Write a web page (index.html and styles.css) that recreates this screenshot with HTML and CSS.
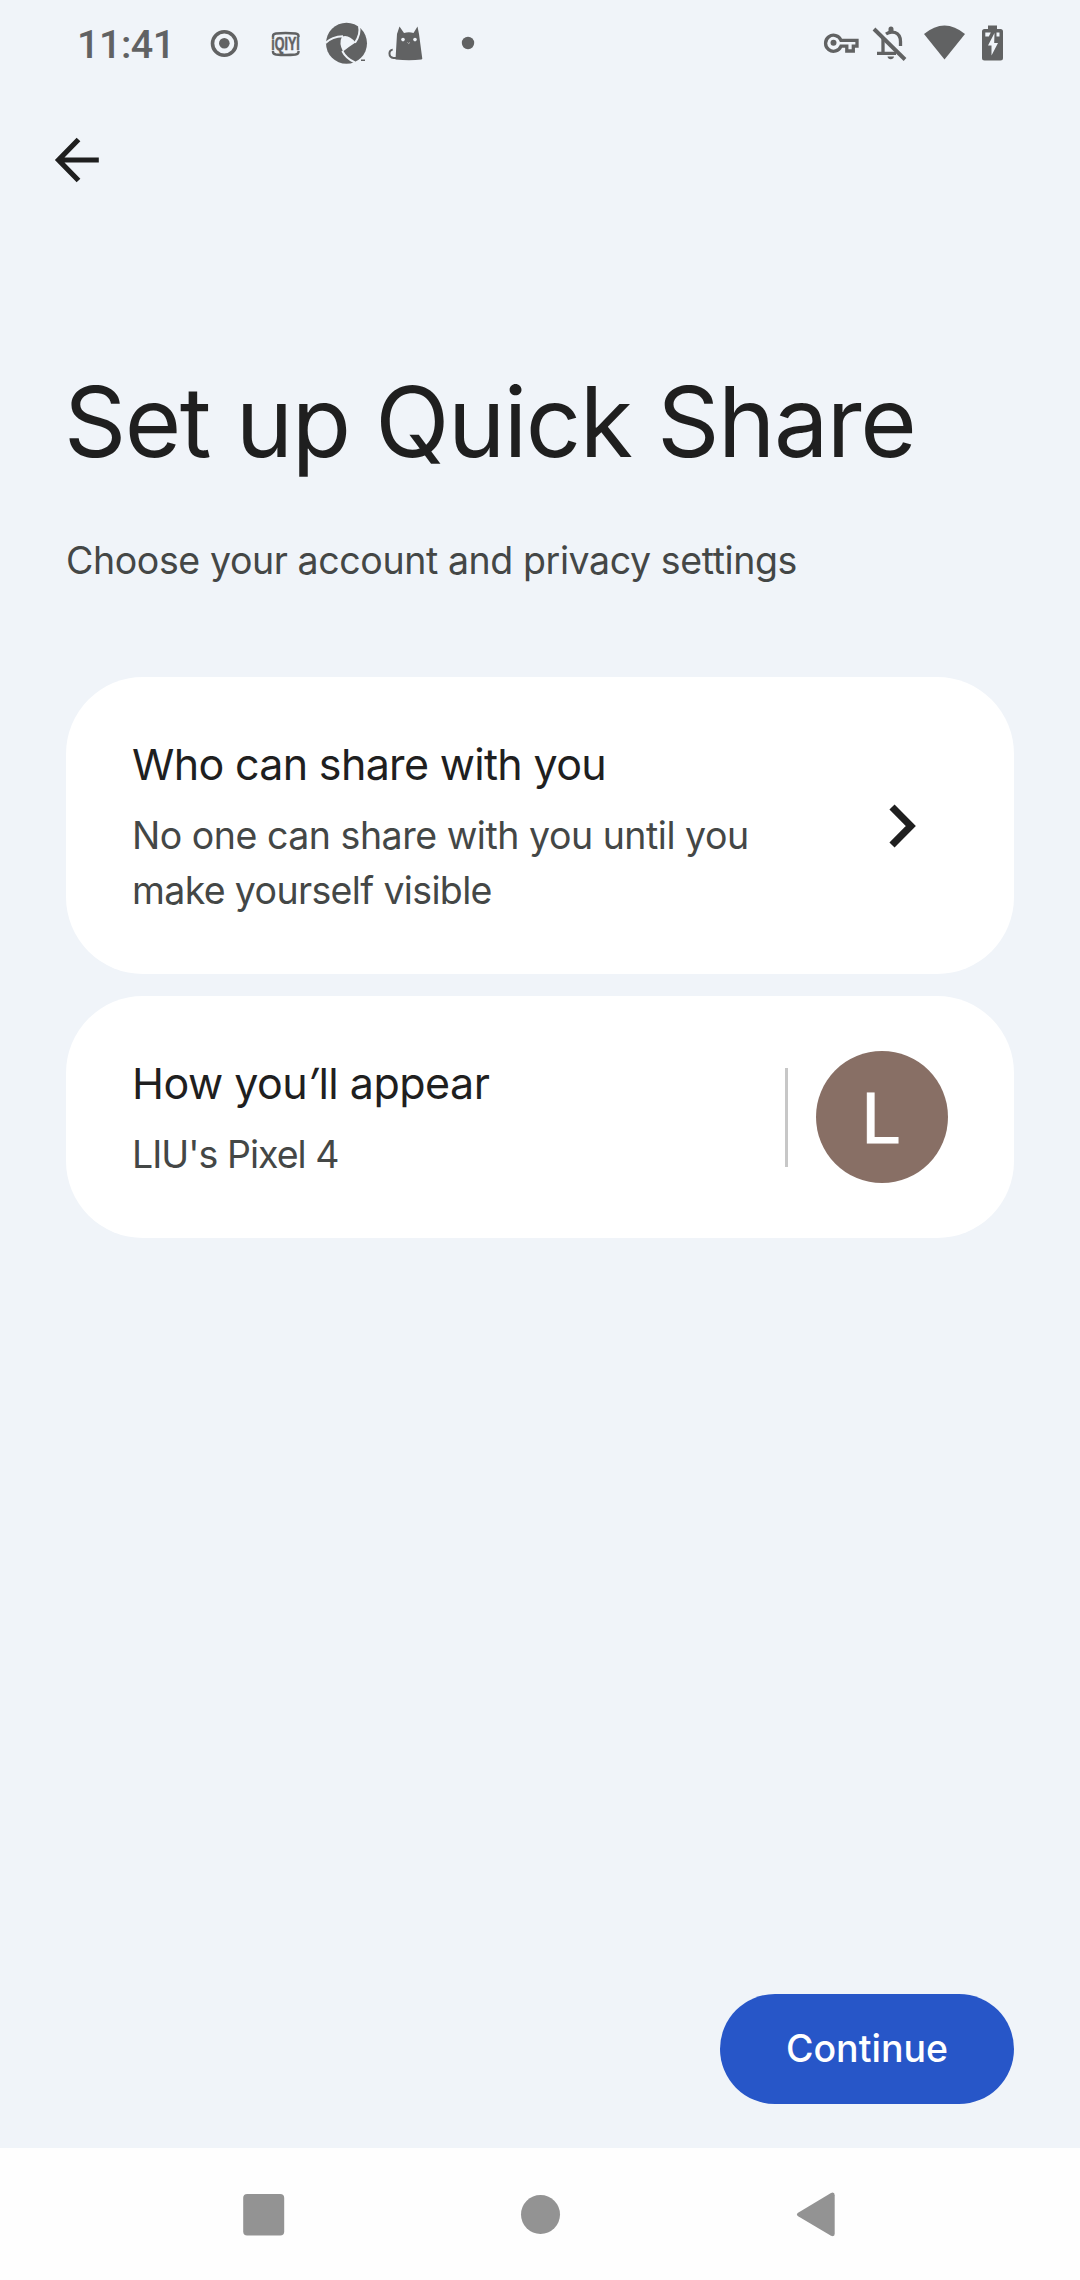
FILE: index.html
```
<!DOCTYPE html>
<html lang="en">
<head>
<meta charset="utf-8">
<title>Quick Share</title>
<link rel="stylesheet" href="styles.css">
</head>
<body>
<div class="screen">
  <header class="status">
    <span class="time">11:41</span>
    <svg class="notifications" width="280" height="88" viewBox="200 0 280 88">
      <circle cx="224.300" cy="43.500" r="11.800" fill="none" stroke="#616263" stroke-width="3.600"/>
      <circle cx="224.300" cy="43.300" r="5.300"/>
      <path d="M273 37v-1q0-2 3-2.500 9.500-1 19.500 0 3 .5 3 2.500V37M273 51v1q0 2 3 2.500 9.500 1 19.500 0 3-.5 3-2.500V51" fill="none" stroke="#616263" stroke-width="2.400"/>
      <text class="badge-text" x="271.300" y="50.300" textLength="28.500" lengthAdjust="spacingAndGlyphs">iQIYI</text>
      <g>
        <circle cx="346.500" cy="43.300" r="20.500"/>
        <path class="cut" d="M342 36.500Q349 34 355.500 42.500Q350 46 343 51.500Q338.500 43 342 36.500Z"/>
        <path class="line" d="M325.500 43Q332 36.500 343 36.200M359 26Q361 34 355 42.800M342.300 51Q346 58.500 355 62.500"/>
        <path d="M361 59.500h4v1.500h-4z"/>
      </g>
      <path d="M397 34l2.500-7.500 4.500 6.500q5-1.500 9.500 0l4-6.500 1.500 7.500 3.300 24.800-.8.700q-12 1.300-26 0z"/>
      <path d="M398 58h-4.500c-5.500-.5-5-8.500-.800-8.300" fill="none" stroke="#616263" stroke-width="2"/>
      <circle class="cut" cx="403" cy="39.600" r="1.800"/><circle class="cut" cx="415" cy="39.600" r="1.800"/>
      <path d="M407.500 42.500l1.200 1 1.200-1" fill="none" stroke="#bbb" stroke-width="1"/>
      <circle cx="468" cy="43" r="6.200"/>
    </svg>
    <svg class="system" width="190" height="88" viewBox="820 0 190 88">
      <g fill="none" stroke="#616263" stroke-width="3.300">
        <path d="M841 40.300H857V46.200H853.300V51H846.800V46.200H841A8 8 0 1 1 841 40.300Z"/>
        <path d="M883 38V53M886 34q4-2.800 9-1.500 5.500 2 5.500 9V46M877 53.300H896" />
        <path d="M874 29L905 59.500" stroke-width="3.900"/>
      </g>
      <circle cx="833.500" cy="42.700" r="3"/>
      <path d="M888.500 31v-2a2.500 2.500 0 0 1 5 0v2zM887.500 56.500h6.500a3.300 3.300 0 0 1-6.500 0z"/>
      <path d="M924 34Q944.500 17 965 34L944.500 59.500Z"/>
      <path d="M988 25.500h9V29h3.500a2.500 2.500 0 0 1 2.500 2.500V58a2.500 2.500 0 0 1-2.500 2.500H984.500A2.500 2.500 0 0 1 982 58V31.500A2.500 2.500 0 0 1 984.500 29H988Z"/>
      <path class="cut" d="M994.500 33L988 45.500h3.500V55.500L998 43h-3.800zM985.300 32.500h5.500l-2 4h-3.500zM996.500 32.500h3v4h-3z"/>
    </svg>
  </header>

  <nav class="appbar">
    <svg width="44" height="46" viewBox="0 0 44 46"><path d="M23.500 2.500L3.500 23l20 20.500M4 23H43.800" fill="none" stroke="#1f1f1f" stroke-width="5.200"/></svg>
  </nav>

  <main class="content">
    <h1 class="title">Set up Quick Share</h1>
    <p class="subtitle">Choose your account and privacy settings</p>

    <section class="card">
      <div class="card-text">
        <h2 class="card-title">Who can share with you</h2>
        <p class="card-body">No one can share with you until you<br><span class="tight">make yourself visible</span></p>
      </div>
      <svg class="chevron" width="28" height="46" viewBox="0 0 28 46"><path d="M3 4L21.800 23L3 42" fill="none" stroke="#1f1f1f" stroke-width="7.200"/></svg>
    </section>

    <section class="card card-small">
      <div class="card-text">
        <h2 class="card-title wide">How you<span class="apostrophe">′</span>ll appear</h2>
        <p class="card-body device">LIU's Pixel 4</p>
      </div>
      <div class="divider"></div>
      <div class="avatar">L</div>
    </section>
  </main>

  <footer class="actions"><button class="continue">Continue</button></footer>

  <nav class="navbar">
    <svg width="42" height="46" viewBox="0 0 42 46"><rect x=".2" y="3" width="41" height="41.500" rx="4"/></svg>
    <svg width="42" height="46" viewBox="0 0 42 46"><circle cx="20.500" cy="23.500" r="19.500"/></svg>
    <svg width="42" height="46" viewBox="0 0 42 46"><path d="M1.500 21.500L34 1.900Q37.700.5 37.700 4.200V42.700Q37.700 46.200 34 44.700L1.500 25.500Q-1.800 23.500 1.500 21.500Z"/></svg>
  </nav>
</div>
</body>
</html>
```
FILE: styles.css
```
* { box-sizing: border-box; }
body, h1, h2, p { margin: 0; }
body { background: #f0f4f9; font-family: Inter, "Noto Sans", sans-serif; font-weight: 400; color: #1f1f1f; }
svg { display: block; flex: none; overflow: visible; }
.screen { width: 1080px; height: 2280px; display: flex; flex-direction: column; }

.status { height: 88px; display: flex; align-items: center; padding: 0 70px 0 77px; flex: none; }
.status svg { fill: #616263; }
.time { width: 123px; padding-top: 2px; font: 500 39.5px/46px Roboto, sans-serif; letter-spacing: -.5px; color: #616263; }
.system { margin-left: auto; }
.status svg .cut { fill: #f0f4f9; }
.status svg .line { fill: none; stroke: #f0f4f9; stroke-width: 2; }
.badge-text { font: 700 18.5px "Liberation Sans", sans-serif; stroke: #616263; stroke-width: .5px; }

.appbar { height: 144px; display: flex; align-items: center; padding-left: 55px; flex: none; }

.content { flex: 1; padding: 131px 66px 0; }
.title { margin-left: -2px; font-size: 97px; line-height: 118px; font-weight: 400; letter-spacing: -1.5px; white-space: nowrap; }
.subtitle { margin: 52px 0 89px; font-size: 37.5px; line-height: 55px; letter-spacing: -.4px; color: #444746; }

.card { height: 297px; display: flex; align-items: center; background: #fff; border-radius: 77px; padding: 0 66px; margin-bottom: 22px; }
.card-small { height: 242px; }
.card-text { flex: 1; align-self: flex-start; padding-top: 57px; white-space: nowrap; }
.card-title { font-size: 43px; line-height: 60px; font-weight: 400; letter-spacing: -.68px; }
.wide { letter-spacing: -.5px; }
.apostrophe { display: inline-block; transform: skewX(-14deg); margin: 0 1px; }
.card-body { margin-top: 14px; font-size: 37.5px; line-height: 55px; letter-spacing: -.48px; color: #444746; }
.tight { letter-spacing: -.64px; }
.device { letter-spacing: -.97px; }
.chevron { margin: 1px 31px 0 0; }
.divider { width: 3px; height: 99px; background: #c7c7c7; margin-right: 28px; }
.avatar { width: 132px; height: 132px; border-radius: 50%; background: #886f65; color: #fff; font: 400 71px/135px Roboto, sans-serif; text-align: center; padding-right: 3px; -webkit-text-stroke: 1px #fff; }

.actions { display: flex; justify-content: flex-end; padding: 0 66px 44px; flex: none; }
.continue { width: 294px; height: 110px; border: 0; border-radius: 55px; background: #2756c8; color: #fff; font: 500 37.5px/55px Inter, sans-serif; padding: 0 0 1px; }

.navbar { height: 132px; background: #fefefe; display: flex; align-items: center; gap: 235px; padding-left: 243px; flex: none; }
.navbar svg { fill: #939393; }
```
